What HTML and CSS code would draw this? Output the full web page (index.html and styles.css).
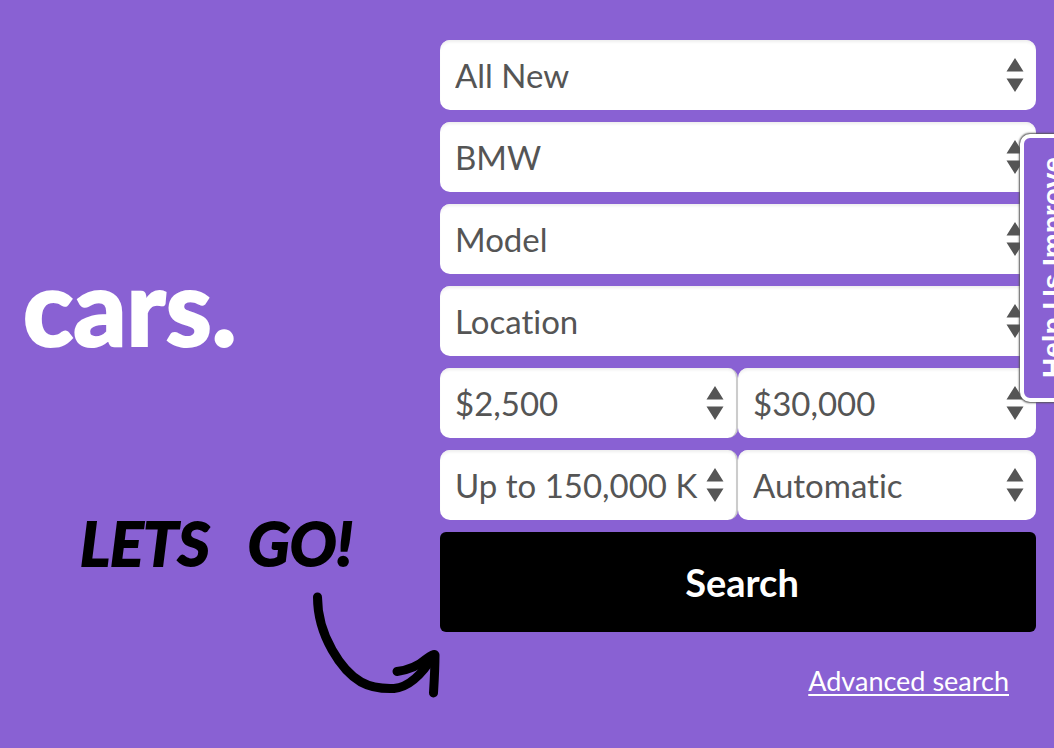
FILE: index.html
```html
<!DOCTYPE html>
<html lang="en">
<head>
<meta charset="utf-8">
<meta name="viewport" content="width=device-width, initial-scale=1">
<title>Car search</title>
<link rel="stylesheet" href="styles.css">
</head>
<body>
<svg class="defs" aria-hidden="true">
  <symbol id="sorter" viewBox="0 0 18 34"><path d="M9 0 17.500 13.500H.5zM9 34 .5 20.500h17z"/></symbol>
</svg>
<main class="hero">
  <section class="intro">
    <h1 class="title">cars.</h1>
    <p class="callout"><span>LETS</span> <span>GO!</span></p>
    <svg class="arrow" viewBox="0 0 130 108" aria-hidden="true">
      <path class="shaft" d="M7.500 7C7.500 46 32 81 51 92C60 97 71 99 84 98.500C100 97 113 83 124 65"/>
      <path class="head" d="M87 81.500Q105 79 116 69Q124 63 125 65Q125 78 123.500 103"/>
    </svg>
  </section>
  <form class="search">
    <label class="field"><select class="control" aria-label="Condition"><option>All New</option></select><svg class="sorter" aria-hidden="true"><use href="#sorter"/></svg></label>
    <label class="field"><select class="control" aria-label="Make"><option>BMW</option></select><svg class="sorter" aria-hidden="true"><use href="#sorter"/></svg></label>
    <label class="field"><select class="control" aria-label="Model"><option>Model</option></select><svg class="sorter" aria-hidden="true"><use href="#sorter"/></svg></label>
    <label class="field"><select class="control" aria-label="Location"><option>Location</option></select><svg class="sorter" aria-hidden="true"><use href="#sorter"/></svg></label>
    <div class="pair">
      <label class="field"><select class="control" aria-label="Minimum price"><option>$2,500</option></select><svg class="sorter" aria-hidden="true"><use href="#sorter"/></svg></label>
      <label class="field"><select class="control" aria-label="Maximum price"><option>$30,000</option></select><svg class="sorter" aria-hidden="true"><use href="#sorter"/></svg></label>
    </div>
    <div class="pair">
      <label class="field"><select class="control" aria-label="Mileage"><option>Up to 150,000 K</option></select><svg class="sorter" aria-hidden="true"><use href="#sorter"/></svg></label>
      <label class="field"><select class="control" aria-label="Transmission"><option>Automatic</option></select><svg class="sorter" aria-hidden="true"><use href="#sorter"/></svg></label>
    </div>
    <button class="submit" type="submit">Search</button>
    <a class="advanced" href="#">Advanced search</a>
  </form>
</main>
<button class="feedback" type="button">Help Us Improve</button>
</body>
</html>
```
FILE: styles.css
```css
* { box-sizing: border-box; }

body {
  margin: 0;
  min-height: 100vh;
  background: #8961d3;
  color: #fff;
  font-family: Lato, "Liberation Sans", sans-serif;
  overflow: hidden;
}

.defs { position: absolute; width: 0; height: 0; }

.hero {
  display: grid;
  grid-template-columns: 440fr 596fr;
  padding: 40px 18px 40px 0;
}

.intro {
  display: flex;
  flex-direction: column;
  padding-top: 202px;
}

.title {
  margin: 0 0 0 23px;
  font-size: 104px;
  font-weight: 900;
  line-height: 128px;
  -webkit-text-stroke: 2px #fff;
}

.callout {
  display: flex;
  gap: 38px;
  margin: 134px 0 0 80px;
  color: #000;
  font-size: 62px;
  font-weight: 700;
  font-style: italic;
  line-height: 76px;
  -webkit-text-stroke: 2px #000;
}

.arrow {
  align-self: flex-end;
  width: 130px;
  height: 108px;
  margin-top: 10px;
  fill: none;
  stroke: #000;
  stroke-width: 9;
  stroke-linecap: round;
  stroke-linejoin: round;
}

.search {
  display: flex;
  flex-direction: column;
  gap: 12px;
}

.field { display: grid; }

.control {
  grid-area: 1 / 1;
  width: 100%;
  height: 70px;
  padding: 0 36px 0 15px;
  appearance: none;
  border: 0;
  border-radius: 10px;
  background: #fff;
  box-shadow: inset 0 3px 3px -1px #eee;
  color: #555;
  font: 33px Lato, "Liberation Sans", sans-serif;
  font-variant-ligatures: none;
}

.sorter {
  grid-area: 1 / 1;
  place-self: center end;
  width: 18px;
  height: 34px;
  margin-right: 12px;
  fill: #555;
  pointer-events: none;
}

.pair {
  display: grid;
  grid-template-columns: 1fr 1fr;
}

.pair .field:first-child .control { border-right: 2px solid #ccc; }
.pair .field:first-child .sorter { margin-right: 14px; }

.submit {
  height: 100px;
  border: 0;
  border-radius: 6px;
  background: #000;
  color: #fff;
  font: bold 38px Lato, "Liberation Sans", sans-serif;
  padding: 0 0 0 8px;
}

.advanced {
  align-self: flex-end;
  margin: 20px 27px 0 0;
  color: #fff;
  font-size: 27px;
  line-height: 34px;
  text-decoration-thickness: 2px;
  text-underline-offset: 3px;
}

.feedback {
  position: absolute;
  top: 134px;
  right: -32px;
  width: 66px;
  height: 268px;
  padding: 0;
  border: 4px solid #fff;
  border-radius: 10px;
  background: #8961d3;
  box-shadow: 0 0 2px 1px #555;
  color: #fff;
  font: bold 28px "Liberation Sans", Arial, sans-serif;
  line-height: 32px;
  writing-mode: vertical-rl;
  transform: rotate(180deg);
}
```
